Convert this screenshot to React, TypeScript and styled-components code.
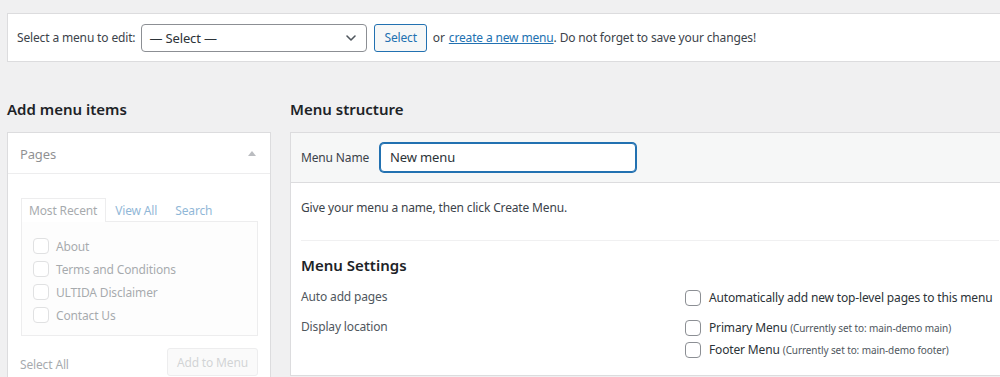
import React from "react";
import styled, { createGlobalStyle } from "styled-components";

const GlobalStyle = createGlobalStyle`
  html, body { margin: 0; padding: 0; }
  body {
    background: #f0f0f1;
    font-family: "Noto Sans", "Open Sans", sans-serif;
    font-size: 12px;
    letter-spacing: -0.15px;
    color: #3c434a;
  }
  * { box-sizing: border-box; }
`;

const Page = styled.div`
  width: 1000px;
  height: 377px;
  overflow: hidden;
  padding: 13px 0 0 7px;
`;

const TopBar = styled.div`
  width: 1010px;
  height: 49px;
  background: #fff;
  border: 1px solid #dcdcde;
  display: flex;
  align-items: center;
  padding: 0 9px;
  white-space: nowrap;
`;

const BarLabel = styled.span`
  margin-right: 6px;
`;

const SelectBox = styled.div`
  width: 226px;
  height: 28px;
  border: 1px solid #8c8f94;
  border-radius: 4px;
  background: #fff;
  display: flex;
  align-items: center;
  justify-content: space-between;
  padding: 0 7px 0 7px;
  font-size: 13px;
  color: #2c3338;
`;

const Button = styled.button<{ $disabled?: boolean }>`
  height: 28px;
  padding: 0 9px;
  border-radius: 3px;
  font-family: inherit;
  font-size: 12px;
  letter-spacing: inherit;
  border: 1px solid ${(p) => (p.$disabled ? "#dcdcde" : "#2271b1")};
  background: #f6f7f7;
  color: ${(p) => (p.$disabled ? "#a7aaad" : "#2271b1")};
`;

const BarButton = styled(Button)`
  margin-left: 7px;
  margin-right: 6px;
`;

const Link = styled.a`
  color: #2271b1;
  text-decoration: underline;
  margin: 0 0 0 4px;
`;

const Columns = styled.div`
  display: flex;
  gap: 19px;
  margin-top: 35px;
  align-items: flex-start;
`;

const LeftCol = styled.div`
  width: 264px;
  flex-shrink: 0;
`;

const RightCol = styled.div`
  width: 720px;
  flex-shrink: 0;
`;

const Heading = styled.h2`
  margin: 0 0 11px;
  font-size: 15px;
  line-height: 24px;
  font-weight: 600;
  letter-spacing: 0;
  color: #1d2327;
`;

const SidePanel = styled.div`
  background: #fff;
  border: 1px solid #dcdcde;
  height: 260px;
`;

const Faded = styled.div`
  opacity: 0.5;
`;

const SideHeader = styled.div`
  height: 41px;
  border-bottom: 1px solid #dcdcde;
  display: flex;
  align-items: center;
  justify-content: space-between;
  padding: 1px 14px 0 12px;
  font-size: 13px;
  color: #1d2327;
`;

const Arrow = styled.span`
  width: 0;
  height: 0;
  border-left: 4px solid transparent;
  border-right: 4px solid transparent;
  border-bottom: 5px solid #787c82;
`;

const SideBody = styled.div`
  padding: 23px 12px 0 13px;
`;

const Tabs = styled.div`
  display: flex;
  align-items: flex-end;
  height: 24px;
`;

const Tab = styled.span<{ $active?: boolean }>`
  height: 24px;
  display: flex;
  align-items: center;
  padding: 0 8px 0 7px;
  margin-right: 1px;
  color: ${(p) => (p.$active ? "#50575e" : "#2271b1")};
  background: ${(p) => (p.$active ? "#fff" : "transparent")};
  border: 1px solid ${(p) => (p.$active ? "#dcdcde" : "transparent")};
  border-bottom: none;
  position: relative;
  top: 1px;
`;

const TabPanel = styled.div`
  border: 1px solid #dcdcde;
  background: #fcfcfc;
  height: 115px;
  padding: 16px 0 0 11px;
  display: flex;
  flex-direction: column;
  gap: 7px;
`;

const Item = styled.label`
  display: flex;
  align-items: center;
  gap: 7px;
  height: 16px;
  color: #50575e;
`;

const Check = styled.span<{ $strong?: boolean }>`
  width: 16px;
  height: 16px;
  border: 1px solid ${(p) => (p.$strong ? "#8c8f94" : "#c3c4c7")};
  border-radius: 4px;
  background: #fff;
  flex-shrink: 0;
`;

const SideFooter = styled.div`
  display: flex;
  justify-content: space-between;
  align-items: flex-end;
  padding: 12px 12px 0 12px;
`;

const SelectAll = styled.span`
  color: #50575e;
  line-height: 20px;
  margin-bottom: 1px;
`;

const MainPanel = styled.div`
  background: #fff;
  border: 1px solid #dcdcde;
  height: 244px;
`;

const MainHeader = styled.div`
  height: 50px;
  background: #f6f7f7;
  border-bottom: 1px solid #dcdcde;
  display: flex;
  align-items: center;
  padding: 0 10px 1px;
  gap: 11px;
`;

const NameInput = styled.div`
  width: 256px;
  height: 29px;
  border: 1px solid #2271b1;
  box-shadow: 0 0 0 1px #2271b1;
  border-radius: 4px;
  background: #fff;
  display: flex;
  align-items: center;
  padding: 0 9px;
  font-size: 13px;
  color: #2c3338;
`;

const MainBody = styled.div`
  padding: 0 10px;
`;

const Hint = styled.p`
  margin: 0;
  padding: 15px 0 0;
  height: 58px;
  border-bottom: 1px solid #f0f0f1;
  line-height: 20px;
`;

const SettingsTitle = styled.h3`
  margin: 12px 0 9px;
  font-size: 15px;
  line-height: 24px;
  font-weight: 600;
  letter-spacing: 0;
  color: #1d2327;
`;

const SettingRow = styled.div`
  display: grid;
  grid-template-columns: 384px 1fr;
  margin-bottom: 8px;
`;

const SettingLabel = styled.span`
  line-height: 22px;
  color: #50575e;
`;

const Options = styled.div`
  display: flex;
  flex-direction: column;
  gap: 5px;
  padding-top: 3px;
`;

const Option = styled.label`
  display: flex;
  align-items: center;
  gap: 8px;
  height: 17px;
  color: #2c3338;
  white-space: nowrap;
`;

const Note = styled.span`
  font-size: 10px;
  letter-spacing: -0.1px;
  color: #50575e;
`;

const Chevron = () => (
  <svg width="16" height="16" viewBox="0 0 16 16" fill="none">
    <path d="M4 6l4 4 4-4" stroke="#50575e" strokeWidth="1.6" strokeLinecap="round" strokeLinejoin="round" />
  </svg>
);

const pages = ["About", "Terms and Conditions", "ULTIDA Disclaimer", "Contact Us"];

export default function App() {
  return (
    <>
      <GlobalStyle />
      <Page>
        <TopBar>
          <BarLabel>Select a menu to edit:</BarLabel>
          <SelectBox>
            <span>— Select —</span>
            <Chevron />
          </SelectBox>
          <BarButton>Select</BarButton>
          <span>or</span>
          <Link href="#">create a new menu</Link>
          <span>. Do not forget to save your changes!</span>
        </TopBar>
        <Columns>
          <LeftCol>
            <Heading>Add menu items</Heading>
            <SidePanel>
              <Faded>
                <SideHeader>
                  <span>Pages</span>
                  <Arrow />
                </SideHeader>
                <SideBody>
                  <Tabs>
                    <Tab $active>Most Recent</Tab>
                    <Tab>View All</Tab>
                    <Tab>Search</Tab>
                  </Tabs>
                  <TabPanel>
                    {pages.map((p) => (
                      <Item key={p}>
                        <Check />
                        {p}
                      </Item>
                    ))}
                  </TabPanel>
                </SideBody>
                <SideFooter>
                  <SelectAll>Select All</SelectAll>
                  <Button $disabled>Add to Menu</Button>
                </SideFooter>
              </Faded>
            </SidePanel>
          </LeftCol>
          <RightCol>
            <Heading>Menu structure</Heading>
            <MainPanel>
              <MainHeader>
                <span>Menu Name</span>
                <NameInput>New menu</NameInput>
              </MainHeader>
              <MainBody>
                <Hint>Give your menu a name, then click Create Menu.</Hint>
                <SettingsTitle>Menu Settings</SettingsTitle>
                <SettingRow>
                  <SettingLabel>Auto add pages</SettingLabel>
                  <Options>
                    <Option>
                      <Check $strong />
                      Automatically add new top-level pages to this menu
                    </Option>
                  </Options>
                </SettingRow>
                <SettingRow>
                  <SettingLabel>Display location</SettingLabel>
                  <Options>
                    <Option>
                      <Check $strong />
                      <span>
                        Primary Menu <Note>(Currently set to: main-demo main)</Note>
                      </span>
                    </Option>
                    <Option>
                      <Check $strong />
                      <span>
                        Footer Menu <Note>(Currently set to: main-demo footer)</Note>
                      </span>
                    </Option>
                  </Options>
                </SettingRow>
              </MainBody>
            </MainPanel>
          </RightCol>
        </Columns>
      </Page>
    </>
  );
}
